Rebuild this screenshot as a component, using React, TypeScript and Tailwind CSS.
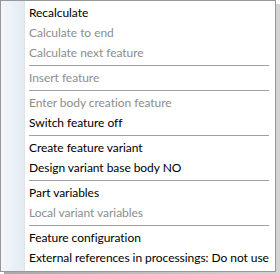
const items: (string | { label: string; disabled?: boolean })[] = [
  { label: 'Recalculate' },
  { label: 'Calculate to end', disabled: true },
  { label: 'Calculate next feature', disabled: true },
  '-',
  { label: 'Insert feature', disabled: true },
  '-',
  { label: 'Enter body creation feature', disabled: true },
  { label: 'Switch feature off' },
  '-',
  { label: 'Create feature variant' },
  { label: 'Design variant base body NO' },
  '-',
  { label: 'Part variables' },
  { label: 'Local variant variables', disabled: true },
  '-',
  { label: 'Feature configuration' },
  { label: 'External references in processings: Do not use' },
];

export default function App() {
  return (
    <div className="h-[274px] w-[280px] bg-white font-['Lato',sans-serif] text-[12px] tracking-[-0.05px]">
      <div className="relative h-[272px] w-[276px]">
        {/* drop shadow */}
        <div className="absolute left-[4px] top-[4px] h-[270px] w-[276px] bg-gradient-to-r from-[#a8a8a8] to-[#d4d4d4]" />
        <div className="relative flex h-full w-full border border-[#979797] bg-white">
          <div className="w-[23px] shrink-0 bg-gradient-to-r from-[#f4f7fc] to-[#e4eaf4]" />
          <div className="w-px shrink-0 bg-[#e2e3e3]" />
          <div className="w-px shrink-0 bg-white" />
          <div className="flex min-w-0 flex-1 flex-col pb-[2px] pl-[3px] pr-[6px] pt-[2px]">
            {items.map((it, i) =>
              typeof it === 'string' ? (
                <div key={i} className="flex h-[5px] flex-col justify-center">
                  <div className="h-px bg-[#a0a0a0]" />
                </div>
              ) : (
                <div
                  key={i}
                  className={`flex h-[20px] items-center whitespace-nowrap leading-none ${
                    it.disabled ? 'text-[#8d8d8d]' : 'text-black'
                  }`}
                >
                  {it.label}
                </div>
              )
            )}
          </div>
        </div>
      </div>
    </div>
  );
}
